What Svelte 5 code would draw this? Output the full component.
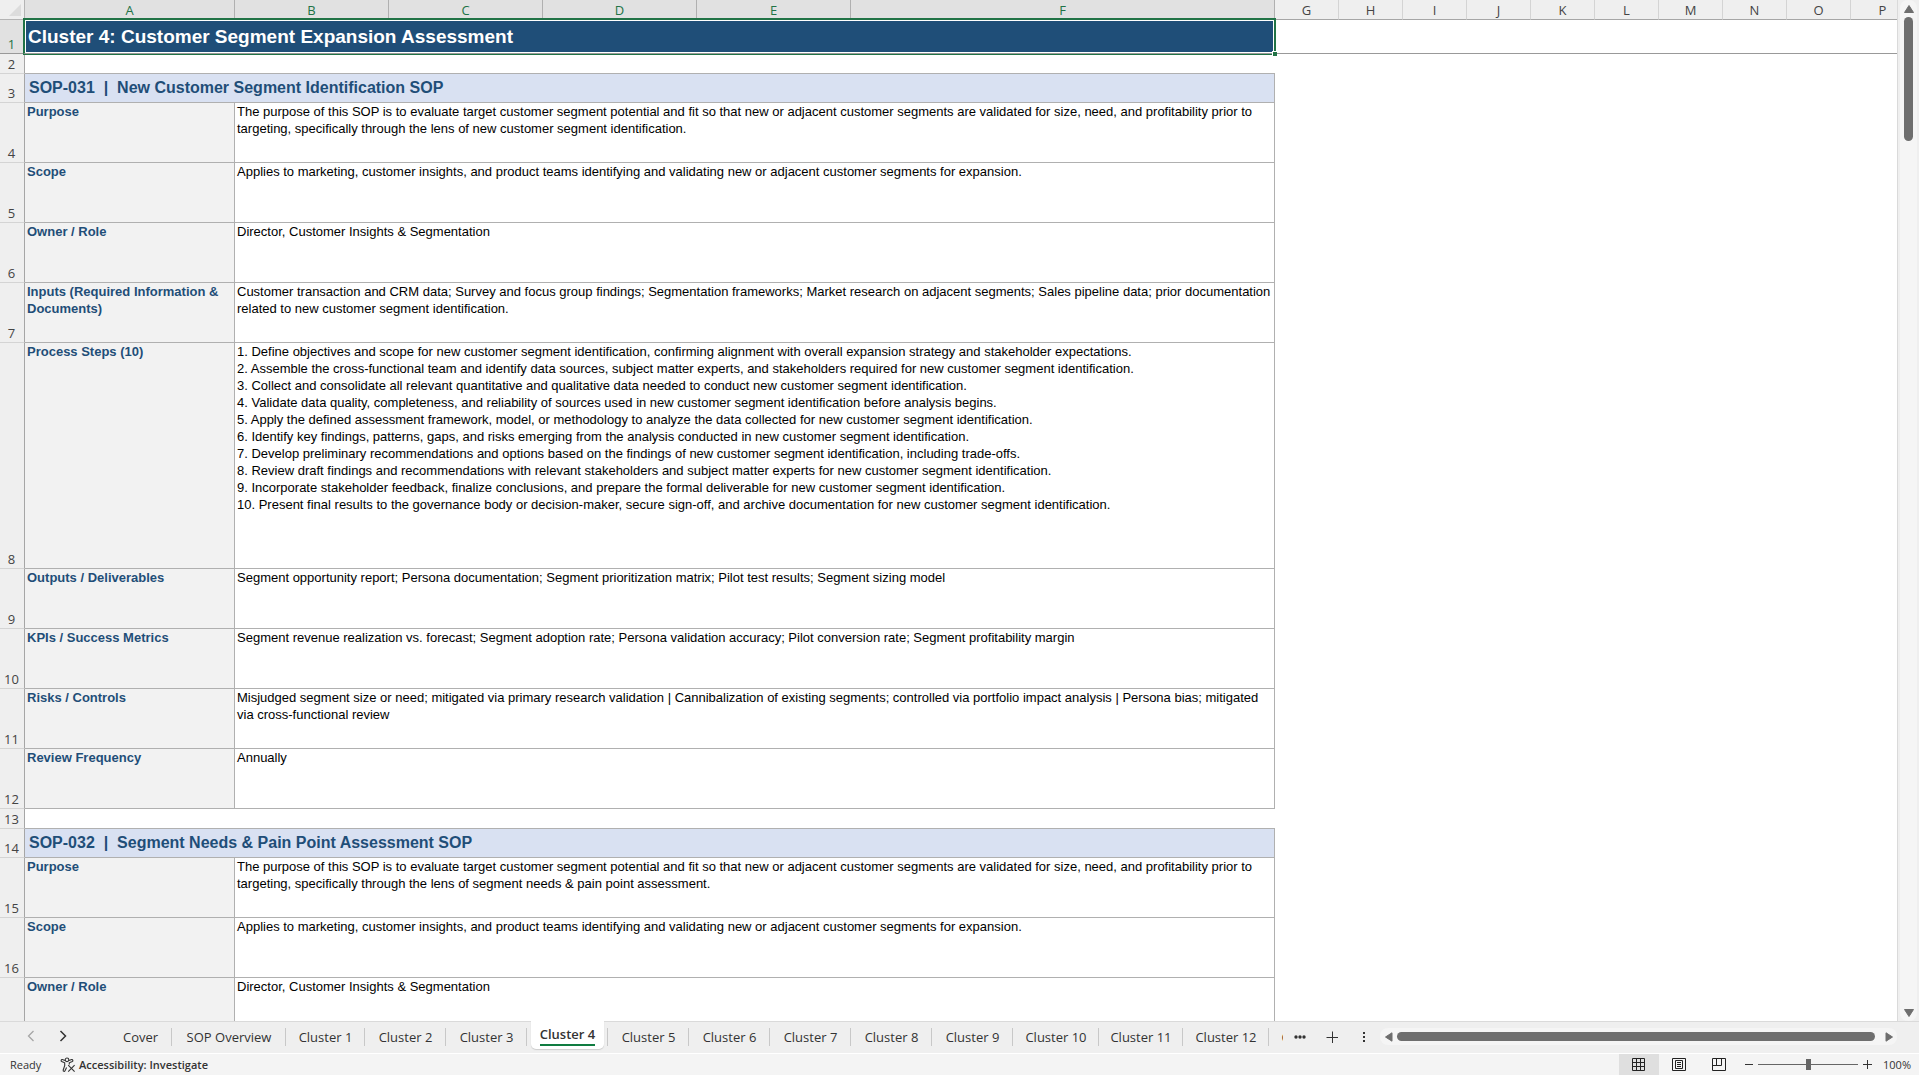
<script>
    const columns = [
        { name: 'A', width: 210 },
        { name: 'B', width: 154 },
        { name: 'C', width: 154 },
        { name: 'D', width: 154 },
        { name: 'E', width: 154 },
        { name: 'F', width: 424 },
        ...'GHIJKLMNOP'.split('').map((name) => ({ name, width: 64 }))
    ];
    const inside = 'ABCDEF';

    const rows = [
        { type: 'title', height: 34, text: 'Cluster 4: Customer Segment Expansion Assessment' },
        { type: 'blank', height: 20 },
        { type: 'section', height: 29, text: 'SOP-031  |  New Customer Segment Identification SOP' },
        { type: 'field', height: 60, label: ['Purpose'], lines: [
            'The purpose of this SOP is to evaluate target customer segment potential and fit so that new or adjacent customer segments are validated for size, need, and profitability prior to',
            'targeting, specifically through the lens of new customer segment identification.'
        ] },
        { type: 'field', height: 60, label: ['Scope'], lines: [
            'Applies to marketing, customer insights, and product teams identifying and validating new or adjacent customer segments for expansion.'
        ] },
        { type: 'field', height: 60, label: ['Owner / Role'], lines: ['Director, Customer Insights & Segmentation'] },
        { type: 'field', height: 60, label: ['Inputs (Required Information &', 'Documents)'], lines: [
            'Customer transaction and CRM data; Survey and focus group findings; Segmentation frameworks; Market research on adjacent segments; Sales pipeline data; prior documentation',
            'related to new customer segment identification.'
        ] },
        { type: 'field', height: 226, label: ['Process Steps (10)'], lines: [
            '1. Define objectives and scope for new customer segment identification, confirming alignment with overall expansion strategy and stakeholder expectations.',
            '2. Assemble the cross-functional team and identify data sources, subject matter experts, and stakeholders required for new customer segment identification.',
            '3. Collect and consolidate all relevant quantitative and qualitative data needed to conduct new customer segment identification.',
            '4. Validate data quality, completeness, and reliability of sources used in new customer segment identification before analysis begins.',
            '5. Apply the defined assessment framework, model, or methodology to analyze the data collected for new customer segment identification.',
            '6. Identify key findings, patterns, gaps, and risks emerging from the analysis conducted in new customer segment identification.',
            '7. Develop preliminary recommendations and options based on the findings of new customer segment identification, including trade-offs.',
            '8. Review draft findings and recommendations with relevant stakeholders and subject matter experts for new customer segment identification.',
            '9. Incorporate stakeholder feedback, finalize conclusions, and prepare the formal deliverable for new customer segment identification.',
            '10. Present final results to the governance body or decision-maker, secure sign-off, and archive documentation for new customer segment identification.'
        ] },
        { type: 'field', height: 60, label: ['Outputs / Deliverables'], lines: [
            'Segment opportunity report; Persona documentation; Segment prioritization matrix; Pilot test results; Segment sizing model'
        ] },
        { type: 'field', height: 60, label: ['KPIs / Success Metrics'], lines: [
            'Segment revenue realization vs. forecast; Segment adoption rate; Persona validation accuracy; Pilot conversion rate; Segment profitability margin'
        ] },
        { type: 'field', height: 60, label: ['Risks / Controls'], lines: [
            'Misjudged segment size or need; mitigated via primary research validation | Cannibalization of existing segments; controlled via portfolio impact analysis | Persona bias; mitigated',
            'via cross-functional review'
        ] },
        { type: 'field', height: 60, label: ['Review Frequency'], lines: ['Annually'] },
        { type: 'blank', height: 20 },
        { type: 'section', height: 29, text: 'SOP-032  |  Segment Needs & Pain Point Assessment SOP' },
        { type: 'field', height: 60, label: ['Purpose'], lines: [
            'The purpose of this SOP is to evaluate target customer segment potential and fit so that new or adjacent customer segments are validated for size, need, and profitability prior to',
            'targeting, specifically through the lens of segment needs & pain point assessment.'
        ] },
        { type: 'field', height: 60, label: ['Scope'], lines: [
            'Applies to marketing, customer insights, and product teams identifying and validating new or adjacent customer segments for expansion.'
        ] },
        { type: 'field', height: 60, partial: true, label: ['Owner / Role'], lines: ['Director, Customer Insights & Segmentation'] }
    ];

    const tabs = [
        { name: 'Cover', width: 63 },
        { name: 'SOP Overview', width: 114 },
        { name: 'Cluster 1', width: 79 },
        ...[2, 3, 4, 5, 6, 7, 8, 9].map((n) => ({ name: `Cluster ${n}`, width: 81 })),
        { name: 'Cluster 10', width: 86 },
        { name: 'Cluster 11', width: 84 },
        { name: 'Cluster 12', width: 86 },
        { name: 'Cluster 13', width: 86 }
    ];

    let active = $state('Cluster 4');
    let zoom = $state(100);
</script>

<div class="app">
    <div class="work">
        <main class="sheet">
            <table>
                <colgroup>
                    <col style="width:25px">
                    {#each columns as col}
                        <col style="width:{col.width}px">
                    {/each}
                </colgroup>
                <thead>
                    <tr>
                        <th class="corner" aria-label="Select all">
                            <svg width="12" height="12" viewBox="0 0 12 12"><path d="M12 0V12H0Z" fill="#dcdcdc"/></svg>
                        </th>
                        {#each columns as col}
                            <th class="colhead" class:picked={inside.includes(col.name)} scope="col">{col.name}</th>
                        {/each}
                    </tr>
                </thead>
                <tbody>
                    {#each rows as row, i}
                        <tr class={row.type} style="height:{row.height}px">
                            <th class="rowhead" class:picked={i === 0} scope="row">{row.partial ? '' : i + 1}</th>
                            {#if row.type === 'title'}
                                <td class="titlecell" colspan="6">
                                    <div class="selection">{row.text}<span class="handle"></span></div>
                                </td>
                            {:else if row.type === 'section'}
                                <td class="sectioncell" colspan="6">{row.text}</td>
                            {:else if row.type === 'field'}
                                <td class="label">
                                    {#each row.label as line}<div>{line}</div>{/each}
                                </td>
                                <td class="value" colspan="5">
                                    {#each row.lines as line}<div>{line}</div>{/each}
                                </td>
                            {:else}
                                <td class="gap" colspan="6"></td>
                            {/if}
                            <td class="rest" colspan="10"></td>
                        </tr>
                    {/each}
                </tbody>
            </table>
        </main>
        <div class="vscroll">
            <button class="arrow" aria-label="Scroll up">
                <svg width="10" height="8" viewBox="0 0 10 8"><path d="M5 0.5 9.5 7.5H0.5Z" fill="#6e6e6e" stroke="#6e6e6e" stroke-linejoin="round"/></svg>
            </button>
            <div class="vthumb"></div>
            <button class="arrow end" aria-label="Scroll down">
                <svg width="10" height="8" viewBox="0 0 10 8"><path d="M5 7.5 9.5 0.5H0.5Z" fill="#6e6e6e" stroke="#6e6e6e" stroke-linejoin="round"/></svg>
            </button>
        </div>
    </div>

    <div class="tabbar">
        <div class="tabnav">
            <button aria-label="Previous sheet">
                <svg width="8" height="12" viewBox="0 0 8 12"><path d="M6.5 1 1.5 6 6.5 11" fill="none" stroke="#a6a6a6" stroke-width="1.3"/></svg>
            </button>
            <button aria-label="Next sheet">
                <svg width="8" height="12" viewBox="0 0 8 12"><path d="M1.5 1 6.5 6 1.5 11" fill="none" stroke="#333" stroke-width="1.5"/></svg>
            </button>
        </div>
        <nav class="tabs">
            {#each tabs as tab}
                <button class="tab" class:active={tab.name === active} style="width:{tab.width}px" onclick={() => active = tab.name}>
                    <span>{tab.name}</span>
                </button>
            {/each}
        </nav>
        <div class="tabtools">
            <button aria-label="More sheets">
                <svg width="12" height="4" viewBox="0 0 12 4"><g fill="#333"><circle cx="2" cy="2" r="1.7"/><circle cx="6" cy="2" r="1.7"/><circle cx="10" cy="2" r="1.7"/></g></svg>
            </button>
            <button aria-label="New sheet">
                <svg width="12" height="12" viewBox="0 0 12 12"><path d="M6.5 0.5V12M0.5 6.5H12" stroke="#333"/></svg>
            </button>
            <button aria-label="Resize tabs">
                <svg width="12" height="12" viewBox="0 0 12 12"><path d="M5 1H7V3H5ZM5 5H7V7H5ZM5 9H7V11H5Z" fill="#333"/></svg>
            </button>
        </div>
        <div class="hscroll">
            <button aria-label="Scroll left">
                <svg width="8" height="10" viewBox="0 0 8 10"><path d="M0.5 5 7 0.8V9.2Z" fill="#6e6e6e" stroke="#6e6e6e" stroke-linejoin="round"/></svg>
            </button>
            <div class="hthumb"></div>
            <button aria-label="Scroll right">
                <svg width="8" height="10" viewBox="0 0 8 10"><path d="M7.5 5 1 0.8V9.2Z" fill="#6e6e6e" stroke="#6e6e6e" stroke-linejoin="round"/></svg>
            </button>
        </div>
    </div>

    <footer class="status">
        <span class="ready">Ready</span>
        <button class="access">
            <svg width="16" height="16" viewBox="0 0 16 16" fill="none" stroke="#333" stroke-width="1.1">
                <circle cx="7" cy="2.8" r="1.8"/>
                <path d="M5 3.6 2.4 2.6C1.2 2.2 0.6 3.8 1.7 4.4L4.7 5.8V8.6L3.2 13C2.9 14.4 4.5 14.8 5 13.8L6.6 10.4"/>
                <path d="M9 3.6 11.6 2.6C12.8 2.2 13.4 3.8 12.3 4.4L9.3 5.8V7.6"/>
                <path d="M8.2 8.2 14.6 14.6M14.6 8.2 8.2 14.6"/>
            </svg>
            Accessibility: Investigate
        </button>
        <div class="views">
            <button class="on" aria-label="Normal">
                <svg width="14" height="14" viewBox="0 0 14 14"><path d="M.5.5H12.5V12.5H.5ZM4.5.5V12.5M8.5.5V12.5M.5 4.5H12.5M.5 8.5H12.5" fill="none" stroke="#222"/></svg>
            </button>
            <button aria-label="Page layout">
                <svg width="14" height="14" viewBox="0 0 14 14"><path d="M.5.5H13.5V12.5H.5ZM3.5 2.5H10.5V10.5H3.5ZM5 4.5H9M5 6.5H9M5 8.5H9" fill="none" stroke="#222"/></svg>
            </button>
            <button aria-label="Page break preview">
                <svg width="14" height="14" viewBox="0 0 14 14"><path d="M.5.5H13.5V12.5H.5ZM4.5.5V7.5M9.5.5V7.5M.5 7.5H9.5" fill="none" stroke="#222"/></svg>
            </button>
        </div>
        <div class="zoom">
            <button aria-label="Zoom out" onclick={() => zoom = Math.max(10, zoom - 10)}>
                <svg width="8" height="9" viewBox="0 0 8 9"><path d="M0 4.5H8" stroke="#333"/></svg>
            </button>
            <input type="range" min="10" max="190" aria-label="Zoom" bind:value={zoom}>
            <button aria-label="Zoom in" onclick={() => zoom = Math.min(190, zoom + 10)}>
                <svg width="9" height="9" viewBox="0 0 9 9"><path d="M0 4.5H9M4.5 0V9" stroke="#333"/></svg>
            </button>
            <span class="percent">{zoom}%</span>
        </div>
    </footer>
</div>

<style>
    :global(body){
        margin: 0;
        overflow: hidden;
    }
    .app{
        display: flex;
        flex-direction: column;
        height: 100vh;
        background: #efefef;
        font-family: "Open Sans", "Noto Sans", sans-serif;
        color: #333;
    }
    button{
        display: flex;
        align-items: center;
        justify-content: center;
        padding: 0;
        border: 0;
        background: none;
        font-family: inherit;
        color: inherit;
    }
    svg{
        display: block;
        flex: none;
    }
    .work{
        display: flex;
        flex: 1;
        min-height: 0;
    }
    .sheet{
        flex: 1;
        min-width: 0;
        overflow: hidden;
        background: white;
        border-right: 1px solid #dadada;
    }
    table{
        width: 1915px;
        table-layout: fixed;
        border-collapse: separate;
        border-spacing: 0;
    }
    th, td{
        box-sizing: border-box;
        padding: 0;
        overflow: hidden;
    }
    th{
        font-size: 13px;
        font-weight: normal;
        color: #444;
        background: #efefef;
    }
    thead tr{
        height: 20px;
    }
    .corner{
        border-right: 1px solid #b4b4b4;
        border-bottom: 1px solid #b4b4b4;
        padding: 0 3px 3px 9px;
        vertical-align: bottom;
    }
    .colhead{
        line-height: 18px;
        padding-top: 1px;
        border-right: 1px solid #d4d4d4;
        border-bottom: 1px solid #a6a6a6;
    }
    .colhead.picked{
        background: #e1e1e1;
        color: #217346;
        border-right-color: #b0b0b0;
    }
    .rowhead{
        vertical-align: bottom;
        line-height: 17px;
        padding-right: 1px;
        border-right: 1px solid #a6a6a6;
        border-bottom: 1px solid #d4d4d4;
    }
    .rowhead.picked{
        background: #e1e1e1;
        color: #217346;
        border-bottom-color: #999;
    }
    td{
        font-family: "Liberation Sans", Arial, sans-serif;
        white-space: pre;
    }
    .titlecell{
        position: relative;
        overflow: visible;
        height: 34px;
    }
    /* green frame sits over the grid lines, the freeze line runs through its lower edge */
    .selection{
        position: absolute;
        inset: -2px -1px 0 -2px;
        border: 2px solid #217346;
        border-bottom: 1px solid #999;
        box-shadow: inset 0 0 0 1px white, 0 1px 0 #217346;
        background: #1f4e78;
        color: white;
        font-size: 19px;
        font-weight: bold;
        line-height: 33px;
        padding-left: 3px;
    }
    .handle{
        position: absolute;
        right: -3px;
        bottom: -3px;
        width: 4px;
        height: 4px;
        background: #217346;
        border-top: 1px solid white;
        border-left: 1px solid white;
    }
    .title .rest{
        border-bottom: 1px solid #999;
    }
    .gap{
        border-bottom: 1px solid #b0b0b0;
    }
    .sectioncell{
        background: #d9e1f2;
        color: #1f4e78;
        font-size: 16px;
        font-weight: bold;
        line-height: 28px;
        padding-left: 4px;
        border-right: 1px solid #b0b0b0;
        border-bottom: 1px solid #b0b0b0;
    }
    .label, .value{
        vertical-align: top;
        font-size: 13px;
        line-height: 17px;
        padding: 0 0 0 2px;
        border-right: 1px solid #b0b0b0;
        border-bottom: 1px solid #b0b0b0;
    }
    .label{
        background: #f2f2f2;
        color: #1f4e78;
        font-weight: bold;
    }
    .value{
        color: black;
    }
    .vscroll{
        display: flex;
        flex-direction: column;
        align-items: center;
        width: 17px;
        margin: 0 2px;
        background: #f5f5f5;
        border-radius: 8px;
    }
    .arrow{
        height: 17px;
        width: 17px;
    }
    .vthumb{
        width: 9px;
        height: 124px;
        border-radius: 5px;
        background: #6e6e6e;
    }
    .arrow.end{
        margin-top: auto;
    }
    .tabbar{
        display: flex;
        height: 32px;
        box-sizing: border-box;
        border-top: 1px solid #dadada;
    }
    .tabnav{
        display: flex;
        gap: 24px;
        padding: 0 42px 3px 27px;
    }
    .tabs{
        display: flex;
        flex: none;
        width: 1174px;
        overflow: hidden;
        margin-top: -1px;
    }
    .tab{
        position: relative;
        flex: none;
        font-size: 13px;
        line-height: 20px;
    }
    .tab::after{
        content: "";
        position: absolute;
        right: 0;
        top: 7px;
        height: 18px;
        width: 1px;
        background: #c8c8c8;
    }
    .tab.active{
        align-items: flex-start;
        font-weight: 600;
    }
    .tab.active::before{
        content: "";
        position: absolute;
        inset: 0 4px 4px 4px;
        background: white;
        border-radius: 0 0 5px 5px;
        box-shadow: 0 1px 1px #ccc;
    }
    .tab.active span{
        position: relative;
        margin-top: 3px;
        border-bottom: 2px solid #107c41;
    }
    .tabtools{
        display: flex;
        gap: 20px;
        padding: 0 10px 2px 11px;
    }
    .hscroll{
        display: flex;
        align-items: center;
        flex: 1;
        gap: 4px;
        height: 17px;
        margin: 6px 22px 0 0;
        padding: 0 4px 0 5px;
        background: #f5f5f5;
        border-radius: 8px;
    }
    .hthumb{
        flex: 1;
        height: 9px;
        margin-right: 6px;
        border-radius: 5px;
        background: #6e6e6e;
    }
    .status{
        display: flex;
        align-items: stretch;
        height: 21px;
        border-top: 1px solid white;
        background: #f4f4f4;
        font-size: 11px;
        line-height: 21px;
    }
    .ready{
        width: 50px;
        padding-left: 10px;
    }
    .access{
        gap: 3px;
        font-size: 11px;
        font-weight: 600;
    }
    .views{
        display: flex;
        margin-left: auto;
    }
    .views button{
        width: 40px;
    }
    .views .on{
        background: #dfdfdf;
    }
    .zoom{
        display: flex;
        align-items: center;
        gap: 5px;
        padding: 0 8px 0 6px;
    }
    .zoom input{
        appearance: none;
        width: 100px;
        height: 11px;
        margin: 0;
        background: linear-gradient(#666, #666) center / 100% 1px no-repeat;
    }
    .zoom input::-webkit-slider-thumb{
        appearance: none;
        width: 5px;
        height: 11px;
        background: #666;
    }
    .percent{
        display: flex;
        justify-content: flex-end;
        width: 27px;
        margin-left: 7px;
    }
</style>
